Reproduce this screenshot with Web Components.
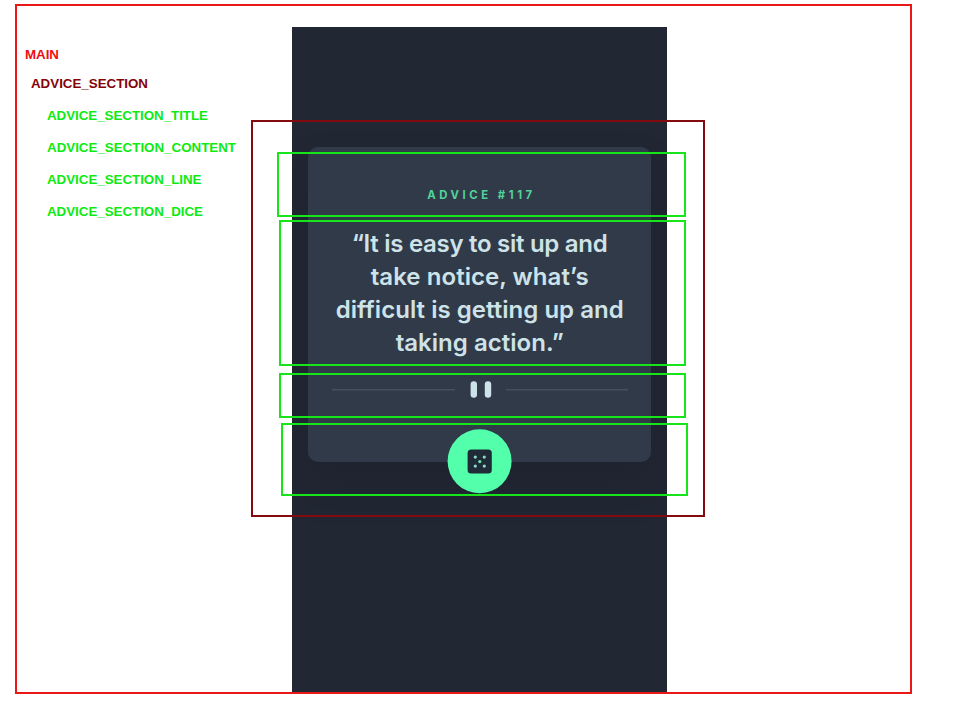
<!DOCTYPE html>
<html lang="en">
<head>
<meta charset="utf-8">
<title>Advice section structure</title>
<style>
html, body { margin: 0; background: #fff; overflow: hidden; }
</style>
</head>
<body>
<structure-board></structure-board>
<script>
const define = (name, html, ready) => {
  const template = document.createElement('template');
  template.innerHTML = html;
  customElements.define(name, class extends HTMLElement {
    connectedCallback() {
      if (this.shadowRoot) return;
      this.attachShadow({ mode: 'open' }).append(template.content.cloneNode(true));
      if (ready) ready(this);
    }
  });
};

// One line of text, tracked so that it spans the given width.
define('fit-line', `
<style>
:host { display: block; text-align: center; white-space: nowrap; }
span { display: inline-block; }
</style>
<span><slot></slot></span>`, el => {
  const span = el.shadowRoot.querySelector('span');
  const n = el.textContent.length;
  const spacing = (Number(el.getAttribute('width')) - span.getBoundingClientRect().width) / (n - 1);
  span.style.letterSpacing = spacing + 'px';
  span.style.marginRight = -spacing + 'px';
});

define('legend-list', `
<style>
:host { display: flex; flex-direction: column; align-items: flex-start; width: 293px; box-sizing: border-box;
  padding: 47px 0 0 25px; font: bold 13.33px/16px "Liberation Sans", Arial, sans-serif; color: #0eea12; }
fit-line { margin: 0 0 16px 22px; }
.main { color: #f10d0d; margin: 0 0 13px 0; }
.section { color: #850308; margin: 0 0 16px 6px; }
</style>
<fit-line class="main" width="34">MAIN</fit-line>
<fit-line class="section" width="117">ADVICE_SECTION</fit-line>
<fit-line width="161">ADVICE_SECTION_TITLE</fit-line>
<fit-line width="189">ADVICE_SECTION_CONTENT</fit-line>
<fit-line width="154.5">ADVICE_SECTION_LINE</fit-line>
<fit-line width="156">ADVICE_SECTION_DICE</fit-line>`);

define('quote-divider', `
<style>
:host { display: block; width: 296px; height: 17px; }
svg { display: block; }
</style>
<svg width="296" height="17" viewBox="0 0 296 17">
<path d="M0 8.8H123M174 8.8H296" stroke="#464f5e" stroke-width="1.4"/>
<rect x="138.6" y="0.2" width="6.4" height="16.6" rx="3.2" fill="#cee3e9"/>
<rect x="152.8" y="0.2" width="6.4" height="16.6" rx="3.2" fill="#cee3e9"/>
</svg>`);

define('dice-button', `
<style>
:host { display: block; width: 64px; height: 64px; }
svg { display: block; overflow: visible; }
</style>
<svg width="64" height="64" viewBox="0.4 -0.3 64 64">
<circle cx="32" cy="32" r="32" fill="#53ffaa"/>
<rect x="20" y="20.2" width="24.2" height="24" rx="3.6" fill="#1f2c37"/>
<g fill="#8fd9cd"><circle cx="27.7" cy="27.8" r="1.6"/><circle cx="36.7" cy="27.8" r="1.6"/><circle cx="27.7" cy="36.8" r="1.6"/><circle cx="36.7" cy="36.8" r="1.6"/></g>
<circle cx="32.2" cy="32.3" r="1.6" fill="#65e7aa"/>
</svg>`);

define('advice-card', `
<style>
:host { display: flex; flex-direction: column; align-items: center; box-sizing: border-box; width: 343px; height: 315px;
  padding-top: 41px; border-radius: 10px; background: #313a48; box-shadow: 0 24px 38px rgba(24,28,37,.25); }
.title { font: 700 11.3px/14px Inter, sans-serif; color: #50d39c; }
.quote { margin-top: 25px; font: 600 24px/33px Inter, "Open Sans", sans-serif; color: #cee3e9; }
quote-divider { margin-top: 22px; }
dice-button { margin-top: 31px; flex: none; }
</style>
<fit-line class="title" width="105">ADVICE #117</fit-line>
<div class="quote">
<fit-line width="256">“It is easy to sit up and</fit-line>
<fit-line width="218">take notice, what’s</fit-line>
<fit-line width="288">difficult is getting up and</fit-line>
<fit-line width="168">taking action.”</fit-line>
</div>
<quote-divider></quote-divider>
<dice-button></dice-button>`);

define('phone-screen', `
<style>
:host { display: flex; justify-content: center; align-items: flex-start; box-sizing: border-box; width: 374.5px; height: 667px;
  margin-top: 26.5px; padding-top: 120px; background: #212733; overflow: hidden; }
</style>
<advice-card></advice-card>`);

// Outline laid over the screen to mark one block of the structure.
define('block-outline', `
<style>
:host { position: absolute; box-sizing: border-box; border: 2px solid; pointer-events: none; }
</style>`, el => {
  const [x, y, w, h] = el.getAttribute('box').split(' ');
  Object.assign(el.style, { left: x + 'px', top: y + 'px', width: w + 'px', height: h + 'px' });
});

define('structure-board', `
<style>
:host { display: flex; align-items: flex-start; position: relative; width: 960px; height: 720px; background: #fff; overflow: hidden; }
phone-screen { margin-left: -.55px; }
.main { color: #ea1717; } .section { color: #830b10; } .part { color: #16e51a; }
</style>
<legend-list></legend-list>
<phone-screen></phone-screen>
<block-outline class="section" box="251 120 454 397"></block-outline>
<block-outline class="part" box="277 152 409 65"></block-outline>
<block-outline class="part" box="279 220 407 146"></block-outline>
<block-outline class="part" box="279 373 407 45"></block-outline>
<block-outline class="part" box="281 423 407 73"></block-outline>
<block-outline class="main" box="15 4 897 690"></block-outline>`);
</script>
</body>
</html>
